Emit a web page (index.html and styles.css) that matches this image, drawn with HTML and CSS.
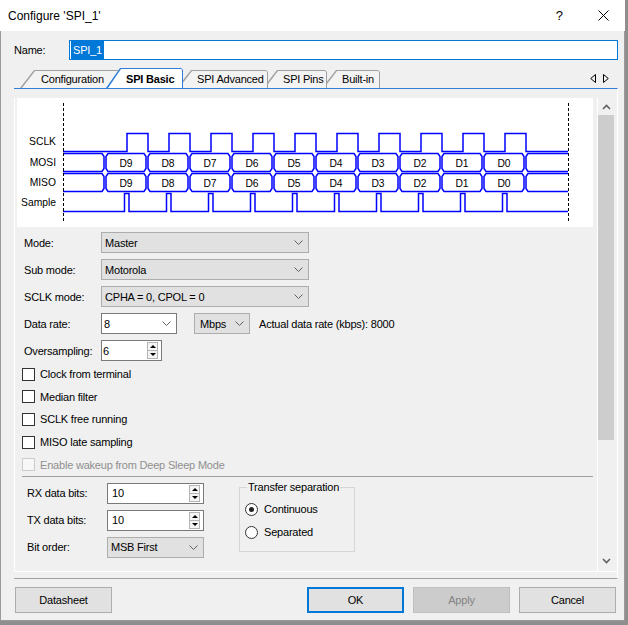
FILE: index.html
```html
<!DOCTYPE html>
<html lang="en">
<head>
<meta charset="utf-8">
<title>Configure 'SPI_1'</title>
<link rel="stylesheet" href="styles.css">
</head>
<body>
<div class="window">
  <div class="titlebar">
    <span class="title">Configure 'SPI_1'</span>
    <span class="help">?</span>
    <svg class="close" width="11" height="11" viewBox="0 0 11 11"><path d="M0.5 0.5L10.5 10.5M10.5 0.5L0.5 10.5" stroke="#000" stroke-width="1" fill="none"/></svg>
  </div>

  <div class="name-row">
    <span class="name-label">Name:</span>
    <div class="name-input"><span class="sel">SPI_1</span></div>
  </div>

  <div class="tabstrip">
    <div class="tab tab-config"><span>Configuration</span></div>
    <div class="tab tab-active tab-basic"><span>SPI Basic</span></div>
    <div class="tab tab-adv"><span>SPI Advanced</span></div>
    <div class="tab tab-pins"><span>SPI Pins</span></div>
    <div class="tab tab-builtin"><span>Built-in</span></div>
    <div class="tab-arrows">
      <svg width="6" height="9" viewBox="0 0 6 9"><path d="M5.5 0.5V8.5L0.7 4.5Z" fill="none" stroke="#000" stroke-width="1"/></svg>
      <svg width="6" height="9" viewBox="0 0 6 9"><path d="M0.5 0.5V8.5L5.3 4.5Z" fill="none" stroke="#000" stroke-width="1"/></svg>
    </div>
  </div>

  <div class="page">
    <div class="scroller">
      <div class="content">
        <div class="wave">
          <svg width="576" height="129" viewBox="17 98 576 129">
            <defs>
              <path id="cell" d="M3 0H39L41 3V15L39 18H3L1 15V3Z"/>
            </defs>
            <g fill="none" stroke="#0000ff" stroke-width="1.5">
              <path d="M63 151.5H127V133.5H148V151.5H169V133.5H190V151.5H211V133.5H232V151.5H253V133.5H274V151.5H295V133.5H316V151.5H337V133.5H358V151.5H379V133.5H400V151.5H421V133.5H442V151.5H463V133.5H484V151.5H505V133.5H526V151.5H568"/>

              <path d="M63 153.5H102L104 156.5V168.5L102 171.5H63"/>
              <use href="#cell" x="105" y="153.5"/>
              <use href="#cell" x="147" y="153.5"/>
              <use href="#cell" x="189" y="153.5"/>
              <use href="#cell" x="231" y="153.5"/>
              <use href="#cell" x="273" y="153.5"/>
              <use href="#cell" x="315" y="153.5"/>
              <use href="#cell" x="357" y="153.5"/>
              <use href="#cell" x="399" y="153.5"/>
              <use href="#cell" x="441" y="153.5"/>
              <use href="#cell" x="483" y="153.5"/>
              <path d="M568 153.5H528L526 156.5V168.5L528 171.5H568"/>

              <path d="M63 173.5H102L104 176.5V188.5L102 191.5H63"/>
              <use href="#cell" x="105" y="173.5"/>
              <use href="#cell" x="147" y="173.5"/>
              <use href="#cell" x="189" y="173.5"/>
              <use href="#cell" x="231" y="173.5"/>
              <use href="#cell" x="273" y="173.5"/>
              <use href="#cell" x="315" y="173.5"/>
              <use href="#cell" x="357" y="173.5"/>
              <use href="#cell" x="399" y="173.5"/>
              <use href="#cell" x="441" y="173.5"/>
              <use href="#cell" x="483" y="173.5"/>
              <path d="M568 173.5H528L526 176.5V188.5L528 191.5H568"/>

              <path d="M63 211.5H124.5V193.5H129V211.5H166.5V193.5H171V211.5H208.5V193.5H213V211.5H250.5V193.5H255V211.5H292.5V193.5H297V211.5H334.5V193.5H339V211.5H376.5V193.5H381V211.5H418.5V193.5H423V211.5H460.5V193.5H465V211.5H502.5V193.5H507V211.5H568"/>
            </g>
            <g stroke="#000" stroke-width="1" stroke-dasharray="3 2">
              <path d="M63.5 103V221M568.5 103V221"/>
            </g>
            <g class="wave-text" text-anchor="end">
              <text x="56" y="145">SCLK</text>
              <text x="56" y="165.5">MOSI</text>
              <text x="56" y="186">MISO</text>
              <text x="56" y="206">Sample</text>
            </g>
            <g class="wave-text" text-anchor="middle">
              <text x="126" y="166.5">D9</text>
              <text x="168" y="166.5">D8</text>
              <text x="210" y="166.5">D7</text>
              <text x="252" y="166.5">D6</text>
              <text x="294" y="166.5">D5</text>
              <text x="336" y="166.5">D4</text>
              <text x="378" y="166.5">D3</text>
              <text x="420" y="166.5">D2</text>
              <text x="462" y="166.5">D1</text>
              <text x="504" y="166.5">D0</text>
              <text x="126" y="186.5">D9</text>
              <text x="168" y="186.5">D8</text>
              <text x="210" y="186.5">D7</text>
              <text x="252" y="186.5">D6</text>
              <text x="294" y="186.5">D5</text>
              <text x="336" y="186.5">D4</text>
              <text x="378" y="186.5">D3</text>
              <text x="420" y="186.5">D2</text>
              <text x="462" y="186.5">D1</text>
              <text x="504" y="186.5">D0</text>
            </g>
          </svg>
        </div>

        <div class="form">
          <div class="row">
            <span class="row-label">Mode:</span>
            <div class="combo combo-wide"><span>Master</span><svg class="chev" width="9" height="5" viewBox="0 0 9 5"><path d="M0.5 0.5L4.5 4.5L8.5 0.5" fill="none" stroke="#606060"/></svg></div>
          </div>
          <div class="row">
            <span class="row-label">Sub mode:</span>
            <div class="combo combo-wide"><span>Motorola</span><svg class="chev" width="9" height="5" viewBox="0 0 9 5"><path d="M0.5 0.5L4.5 4.5L8.5 0.5" fill="none" stroke="#606060"/></svg></div>
          </div>
          <div class="row">
            <span class="row-label">SCLK mode:</span>
            <div class="combo combo-wide"><span>CPHA = 0, CPOL = 0</span><svg class="chev" width="9" height="5" viewBox="0 0 9 5"><path d="M0.5 0.5L4.5 4.5L8.5 0.5" fill="none" stroke="#606060"/></svg></div>
          </div>
          <div class="row">
            <span class="row-label">Data rate:</span>
            <div class="combo input combo-rate"><span>8</span><svg class="chev" width="9" height="5" viewBox="0 0 9 5"><path d="M0.5 0.5L4.5 4.5L8.5 0.5" fill="none" stroke="#606060"/></svg></div>
            <div class="combo combo-unit"><span>Mbps</span><svg class="chev" width="9" height="5" viewBox="0 0 9 5"><path d="M0.5 0.5L4.5 4.5L8.5 0.5" fill="none" stroke="#606060"/></svg></div>
            <span class="actual">Actual data rate (kbps): 8000</span>
          </div>
          <div class="row row-last">
            <span class="row-label">Oversampling:</span>
            <div class="combo input spin spin-over"><span>6</span>
              <div class="spin-btns"><div class="spin-up"></div><div class="spin-down"></div></div>
            </div>
          </div>
        </div>

        <div class="checks">
          <div class="check"><span class="cb"></span><span class="check-label">Clock from terminal</span></div>
          <div class="check"><span class="cb"></span><span class="check-label">Median filter</span></div>
          <div class="check"><span class="cb"></span><span class="check-label">SCLK free running</span></div>
          <div class="check"><span class="cb"></span><span class="check-label">MISO late sampling</span></div>
          <div class="check check-disabled"><span class="cb"></span><span class="check-label">Enable wakeup from Deep Sleep Mode</span></div>
        </div>

        <div class="sep"></div>

        <div class="bottom">
          <div class="bcol">
            <div class="brow">
              <span class="brow-label">RX data bits:</span>
              <div class="combo input spin spin-bits"><span>10</span>
                <div class="spin-btns"><div class="spin-up"></div><div class="spin-down"></div></div>
              </div>
            </div>
            <div class="brow">
              <span class="brow-label">TX data bits:</span>
              <div class="combo input spin spin-bits"><span>10</span>
                <div class="spin-btns"><div class="spin-up"></div><div class="spin-down"></div></div>
              </div>
            </div>
            <div class="brow">
              <span class="brow-label">Bit order:</span>
              <div class="combo combo-order"><span>MSB First</span><svg class="chev" width="9" height="5" viewBox="0 0 9 5"><path d="M0.5 0.5L4.5 4.5L8.5 0.5" fill="none" stroke="#606060"/></svg></div>
            </div>
          </div>
          <div class="group">
            <span class="group-title">Transfer separation</span>
            <div class="radio"><span class="rb rb-on"></span><span class="radio-label">Continuous</span></div>
            <div class="radio"><span class="rb"></span><span class="radio-label">Separated</span></div>
          </div>
        </div>
      </div>

      <div class="vscroll">
        <div class="vbtn"><svg width="9" height="6" viewBox="0 0 9 6"><path d="M1 5L4.5 1.5L8 5" fill="none" stroke="#606060" stroke-width="1.6"/></svg></div>
        <div class="vthumb"></div>
        <div class="vspace"></div>
        <div class="vbtn"><svg width="9" height="6" viewBox="0 0 9 6"><path d="M1 1L4.5 4.5L8 1" fill="none" stroke="#606060" stroke-width="1.6"/></svg></div>
      </div>
    </div>
  </div>

  <div class="buttons">
    <div class="btn">Datasheet</div>
    <div class="btn btn-ok">OK</div>
    <div class="btn btn-apply">Apply</div>
    <div class="btn">Cancel</div>
  </div>
</div>
</body>
</html>
```

FILE: styles.css
```css
* { box-sizing: border-box; }
html, body { margin: 0; padding: 0; }
body {
  width: 628px;
  height: 625px;
  overflow: hidden;
  background: #8e8e8e;
  font-family: "Liberation Sans", Arial, sans-serif;
  font-size: 11px;
  letter-spacing: -0.2px;
  color: #000;
}
.window {
  width: 625px;
  height: 621px;
  background: #f0f0f0;
  box-shadow: inset 1px 0 0 #9a9a9a, inset -1px 0 0 #9a9a9a, inset 0 -1px 0 #9a9a9a;
  display: flex;
  flex-direction: column;
}

/* title bar */
.titlebar {
  height: 31px;
  background: #fff;
  display: flex;
  align-items: center;
  padding-left: 8px;
  flex: none;
}
.title { font-size: 12px; letter-spacing: 0; }
.help { margin-left: auto; font-size: 13px; letter-spacing: 0; margin-right: 35px; }
.close { margin-right: 16px; display: block; }

/* name */
.name-row {
  margin-top: 9px;
  height: 20px;
  display: flex;
  align-items: center;
  padding-left: 14px;
  flex: none;
}
.name-label { width: 55px; }
.name-input {
  width: 549px;
  height: 20px;
  border: 1px solid #0078d7;
  background: #fff;
  padding-left: 1px;
  display: flex;
}
.sel {
  background: #0078d7;
  color: #fff;
  padding: 0 2px;
  display: flex;
  align-items: center;
}

/* tabs */
.tabstrip {
  margin-top: 8px;
  height: 20px;
  display: flex;
  align-items: flex-end;
  padding-left: 20px;
  flex: none;
}
.tab {
  position: relative;
  height: 18px;
  background: #a0a0a0;
  clip-path: polygon(0 100%, 14px 0, calc(100% - 2px) 0, 100% 2px, 100% 100%);
  display: flex;
  align-items: center;
  padding-left: 21px;
  flex: none;
}
.tab::before {
  content: "";
  position: absolute;
  left: 2px;
  top: 1px;
  right: 1px;
  bottom: 0;
  background: #f3f3f3;
  clip-path: polygon(0 100%, 13px 0, calc(100% - 1px) 0, 100% 1px, 100% 100%);
}
.tab span { position: relative; }
.tab-active {
  height: 20px;
  background: #2f7fd8;
  font-weight: bold;
  padding-left: 20px;
  padding-top: 2px;
}
.tab-active::before { background: #fff; }
.tab-config { width: 100px; z-index: 1; }
.tab-basic { width: 77px; margin-left: -14px; z-index: 10; }
.tab-adv { width: 91px; margin-left: -6px; z-index: 5; padding-left: 20px; }
.tab-pins { width: 64px; margin-left: -5px; z-index: 4; padding-left: 20px; }
.tab-builtin { width: 58px; margin-left: -5px; z-index: 3; padding-left: 20px; }
.tab-arrows {
  margin-left: auto;
  margin-right: 16px;
  align-self: center;
  display: flex;
  gap: 7px;
}
.tab-arrows svg { display: block; }

/* page */
.page {
  margin-left: 14px;
  width: 604px;
  height: 491px;
  border-top: 1px solid #2f7fd8;
  border-right: 1px solid #fff;
  border-bottom: 1px solid #a0a0a0;
  padding-top: 9px;
  padding-bottom: 6px;
  flex: none;
}
.scroller {
  height: 474px;
  display: flex;
  border-left: 1px solid #fff;
  border-bottom: 1px solid #fff;
  overflow: hidden;
}
.content {
  width: 582px;
  padding-left: 2px;
  overflow: hidden;
  flex: none;
}
.vscroll {
  width: 20px;
  border-left: 1px solid #fff;
  padding-right: 3px;
  padding-bottom: 2px;
  display: flex;
  flex-direction: column;
  flex: none;
}
.vbtn {
  height: 17px;
  display: flex;
  align-items: center;
  justify-content: center;
}
.vbtn svg { display: block; }
.vthumb { height: 325px; background: #cdcdcd; }
.vspace { flex: 1; }

/* waveform */
.wave { width: 576px; height: 129px; background: #fff; }
.wave svg { display: block; }
.wave-text {
  font-family: "Liberation Sans", Arial, sans-serif;
  font-size: 10.3px;
  letter-spacing: 0;
  fill: #000;
}

/* form rows */
.form { margin-top: 5px; }
.row {
  display: flex;
  align-items: center;
  height: 21px;
  margin-bottom: 6px;
}
.row-last { margin-bottom: 0; }
.row-label { width: 77px; margin-left: 7px; flex: none; }
.combo {
  height: 21px;
  background: #e1e1e1;
  border: 1px solid #adadad;
  display: flex;
  align-items: center;
  padding-left: 3px;
  flex: none;
}
.combo .chev { margin-left: auto; margin-right: 5px; display: block; }
.input { background: #fff; border-color: #7a7a7a; }
.combo-wide { width: 208px; }
.combo-rate { width: 76px; padding-left: 2px; }
.combo-unit { width: 56px; margin-left: 17px; padding-left: 5px; }
.actual { margin-left: 9px; }
.spin-over { width: 61px; padding-left: 1px; }

.spin-btns {
  margin-left: auto;
  margin-right: 3px;
  width: 11px;
  display: flex;
  flex-direction: column;
}
.spin-up, .spin-down {
  height: 9px;
  border: 1px solid #b4b4b4;
  background: #f4f4f4;
  display: flex;
  align-items: center;
  justify-content: center;
}
.spin-down { margin-top: -1px; }
.spin-up::after {
  content: "";
  border-left: 3px solid transparent;
  border-right: 3px solid transparent;
  border-bottom: 3px solid #000;
}
.spin-down::after {
  content: "";
  border-left: 3px solid transparent;
  border-right: 3px solid transparent;
  border-top: 3px solid #000;
}

/* checkboxes */
.checks { margin-top: 2px; }
.check {
  height: 22.6px;
  display: flex;
  align-items: center;
}
.cb {
  width: 13px;
  height: 13px;
  border: 1px solid #333;
  background: #fff;
  margin-left: 5px;
  flex: none;
}
.check-label { margin-left: 5px; }
.check-disabled .cb { border-color: #cccccc; background: #f7f7f7; }
.check-disabled .check-label { color: #8f8f8f; }

.sep { margin-left: 5px; width: 571px; height: 1px; background: #a0a0a0; }

/* bottom group */
.bottom {
  margin-top: 6px;
  display: flex;
  align-items: flex-start;
}
.bcol { margin-left: 10px; }
.brow {
  display: flex;
  align-items: center;
  height: 21px;
  margin-bottom: 6px;
}
.brow-label { width: 80px; flex: none; }
.spin-bits { width: 97px; padding-left: 4px; }
.combo-order { width: 97px; padding-left: 3px; }

.group {
  position: relative;
  margin-left: 35px;
  margin-top: 4px;
  width: 116px;
  height: 65px;
  border: 1px solid #d5d5d5;
  padding: 10px 0 0 5px;
}
.group-title {
  position: absolute;
  top: -7px;
  left: 7px;
  line-height: 13px;
  padding: 0 1px;
  background: #f0f0f0;
}
.radio {
  height: 23px;
  display: flex;
  align-items: center;
}
.rb {
  width: 13px;
  height: 13px;
  border: 1px solid #333;
  border-radius: 50%;
  background: #fff;
  flex: none;
  display: flex;
  align-items: center;
  justify-content: center;
}
.rb-on::after {
  content: "";
  width: 5px;
  height: 5px;
  border-radius: 50%;
  background: #222;
}
.radio-label { margin-left: 6px; }

/* buttons */
.buttons {
  margin-top: 8px;
  height: 26px;
  display: flex;
  padding: 0 9px 0 15px;
  flex: none;
}
.btn {
  width: 97px;
  height: 26px;
  background: #e1e1e1;
  border: 1px solid #adadad;
  display: flex;
  align-items: center;
  justify-content: center;
  flex: none;
}
.btn + .btn { margin-left: 9px; }
.btn-ok { margin-left: auto !important; border: 2px solid #0078d7; }
.btn-apply { background: #cccccc; border-color: #bfbfbf; color: #838383; }
```
